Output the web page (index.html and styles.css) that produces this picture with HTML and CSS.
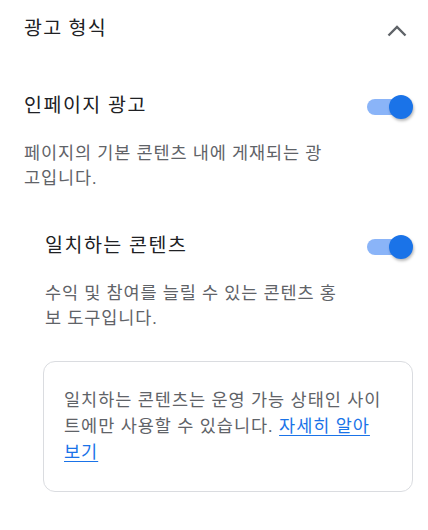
FILE: index.html
```html
<!DOCTYPE html>
<html lang="ko">
<head>
    <meta charset="UTF-8">
    <meta name="viewport" content="width=device-width, initial-scale=1.0">
    <title>광고 형식</title>
    <link rel="stylesheet" href="styles.css">
</head>
<body>
<section class="panel">
    <header class="panel__header">
        <h2 class="panel__title">광고 형식</h2>
        <svg class="panel__chevron" width="20" height="12" viewBox="0 0 20 12" aria-hidden="true">
            <polyline points="1.5,10.5 10,2 18.5,10.5" fill="none" stroke="#5f6368" stroke-width="2.4"/>
        </svg>
    </header>

    <div class="setting">
        <div class="setting__row">
            <h3 class="setting__name">인페이지 광고</h3>
            <span class="switch switch--on"><span class="switch__knob"></span></span>
        </div>
        <p class="setting__desc">페이지의 기본 콘텐츠 내에 게재되는 광고입니다.</p>

        <div class="setting setting--nested">
            <div class="setting__row">
                <h3 class="setting__name">일치하는 콘텐츠</h3>
                <span class="switch switch--on"><span class="switch__knob"></span></span>
            </div>
            <p class="setting__desc setting__desc--nested">수익 및 참여를 늘릴 수 있는 콘텐츠 홍보 도구입니다.</p>

            <div class="notice">
                일치하는 콘텐츠는 운영 가능 상태인 사이트에만 사용할 수 있습니다. <a href="#">자세히 알아보기</a>
            </div>
        </div>
    </div>
</section>
</body>
</html>
```

FILE: styles.css
```css
* {
    margin: 0;
    padding: 0;
    box-sizing: border-box;
}

body {
    background: #fff;
    font-family: Roboto, "Noto Sans CJK KR", sans-serif;
    color: #202124;
}

.panel {
    padding: 0 15px 0 24px;
}

.panel__header {
    display: flex;
    align-items: center;
    justify-content: space-between;
    height: 58px;
}

.panel__title {
    font-size: 19.5px;
    font-weight: 400;
    line-height: 28px;
    letter-spacing: 1.3px;
}

.panel__chevron {
    margin: 3px 6px 0 0;
}

.setting__row {
    display: flex;
    align-items: center;
    justify-content: space-between;
    margin-top: 34px;
    height: 28px;
}

.setting__name {
    font-size: 19.5px;
    font-weight: 400;
    line-height: 28px;
    letter-spacing: 1.5px;
}

.setting__desc {
    margin-top: 21px;
    max-width: 312px;
    font-size: 17.5px;
    line-height: 25px;
    letter-spacing: 0.9px;
    color: #5f6368;
}

.setting--nested {
    padding-left: 21px;
}

.setting--nested .setting__row {
    margin-top: 41px;
}

.setting__desc--nested {
    max-width: 305px;
}

/* toggle */
.switch {
    position: relative;
    display: block;
    width: 46px;
    height: 24px;
    margin-top: 2px;
}

.switch::before {
    content: '';
    position: absolute;
    left: 0;
    top: 4px;
    width: 38px;
    height: 16px;
    border-radius: 8px;
    background: #8ab4f8;
}

.switch__knob {
    position: absolute;
    right: 0;
    top: 0;
    width: 24px;
    height: 24px;
    border-radius: 50%;
    background: #1a73e8;
    box-shadow: 1px 2px 3px rgba(0, 0, 0, 0.28);
}

.notice {
    margin: 30px 0 0 -2px;
    padding: 25px 25px 26px 20px;
    border: 1px solid #dadce0;
    border-radius: 12px;
    font-size: 17.5px;
    line-height: 26px;
    letter-spacing: 1px;
    color: #5f6368;
}

.notice a {
    color: #1a73e8;
    text-decoration: underline;
    text-underline-offset: 3px;
}
```
